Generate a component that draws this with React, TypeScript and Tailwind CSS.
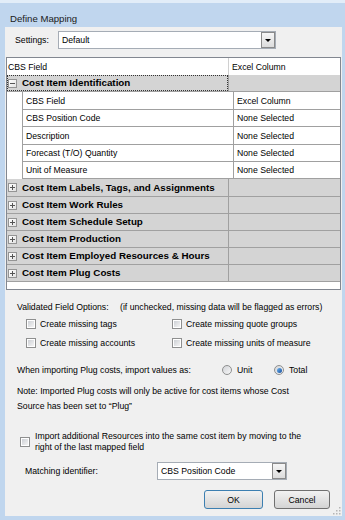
import React from "react";

function Box({ sign }: { sign: "+" | "-" }) {
  return (
    <div className="w-[9px] h-[9px] border border-[#949494] bg-gradient-to-br from-white to-[#e2e2e2] flex items-center justify-center relative shrink-0">
      <div className="absolute left-[1px] top-[3px] w-[5px] h-[1px] bg-[#555]" />
      {sign === "+" && <div className="absolute left-[3px] top-[1px] w-[1px] h-[5px] bg-[#555]" />}
    </div>
  );
}

function Check() {
  return (
    <div className="w-[10px] h-[10px] border border-[#8e8f8f] bg-white p-[1px] shrink-0">
      <div className="w-full h-full bg-gradient-to-br from-[#cdd0d5] to-[#f4f4f4]" />
    </div>
  );
}

function Radio({ on }: { on?: boolean }) {
  return (
    <div className="w-[10px] h-[10px] rounded-full border border-[#8e8f8f] bg-gradient-to-br from-[#d2d4d8] to-[#f7f7f7] flex items-center justify-center shrink-0">
      {on && <div className="w-[5px] h-[5px] rounded-full bg-gradient-to-br from-[#6bb3f0] to-[#1a4f9c]" />}
    </div>
  );
}

function Arrow() {
  return (
    <div className="w-0 h-0 border-l-[3px] border-r-[3px] border-t-[3px] border-l-transparent border-r-transparent border-t-black" />
  );
}

function Combo({ text, w }: { text: string; w: string }) {
  return (
    <div className={`${w} h-[18px] border border-[#a5acb5] bg-white flex items-center justify-between`}>
      <span className="pl-[3px]">{text}</span>
      <div className="w-[14px] h-[16px] border border-[#8a8a8a] bg-gradient-to-b from-[#f6f6f6] to-[#dcdcdc] flex items-center justify-center">
        <Arrow />
      </div>
    </div>
  );
}

const groups = [
  "Cost Item Labels, Tags, and Assignments",
  "Cost Item Work Rules",
  "Cost Item Schedule Setup",
  "Cost Item Production",
  "Cost Item Employed Resources & Hours",
  "Cost Item Plug Costs",
];

const inner = [
  ["CBS Position Code", "h-[17px]"],
  ["Description", "h-[18px]"],
  ["Forecast (T/O) Quantity", "h-[17px]"],
  ["Unit of Measure", "h-[17px]"],
];

export default function App() {
  return (
    <div className="w-[345px] h-[520px] bg-[#c0d6ee] flex flex-col font-['Liberation_Sans',Arial,sans-serif] text-[8.7px] text-black leading-[10px] overflow-hidden relative">
      <div className="h-[3px] bg-[#e2edf8] shrink-0" />
      <div className="h-[24px] pl-[10px] pt-[11px] text-[9.6px] text-[#1a1a1a] shrink-0">Define Mapping</div>
      <div className="flex-1 ml-[5px] mr-[3px] mb-[4px] bg-[#f0f0f0] flex flex-col relative">
        {/* Settings */}
        <div className="mt-[4px] h-[18px] flex items-center">
          <span className="pl-[10px] w-[53px]">Settings:</span>
          <Combo text="Default" w="w-[218px]" />
        </div>

        {/* Grid */}
        <div className="mt-[8px] ml-[1px] w-[335px] h-[233px] border border-[#828790] bg-white flex flex-col">
          <div className="h-[17px] flex shrink-0">
            <div className="w-[222px] border-r border-[#d0d0d0] flex items-center pl-[1px]">CBS Field</div>
            <div className="flex-1 flex items-center pl-[3px]">Excel Column</div>
          </div>
          <div className="h-[17px] flex bg-[#d4d4d4] border-b border-[#a0a0a0] shrink-0">
            <div className="w-[222px] border-r border-[#a0a0a0] flex items-center relative">
              <div className="absolute inset-0 border border-dotted border-[#333]" />
              <div className="ml-[1px]"><Box sign="-" /></div>
              <span className="ml-[5px] font-bold text-[9.8px]">Cost Item Identification</span>
            </div>
            <div className="flex-1" />
          </div>
          <div className="flex shrink-0">
            <div className="w-[15px]" />
            <div className="flex-1 border-l border-[#a0a0a0] flex flex-col">
              <div className="h-[18px] flex border-b border-[#a0a0a0]">
                <div className="w-[211px] border-r border-[#a0a0a0] flex items-center pl-[3px]">CBS Field</div>
                <div className="flex-1 flex items-center pl-[3px]">Excel Column</div>
              </div>
              {inner.map(([t, h]) => (
                <div key={t} className={`${h} flex border-b border-[#a0a0a0]`}>
                  <div className="w-[211px] border-r border-[#a0a0a0] flex items-center pl-[3px]">{t}</div>
                  <div className="flex-1 flex items-center pl-[3px]">None Selected</div>
                </div>
              ))}
            </div>
          </div>
          {groups.map((g, i) => (
            <div key={g} className={`${i === 0 ? "h-[18px]" : "h-[17px]"} flex bg-[#d4d4d4] border-b border-[#a0a0a0] shrink-0`}>
              <div className="w-[222px] border-r border-[#a0a0a0] flex items-center">
                <div className="ml-[1px]"><Box sign="+" /></div>
                <span className="ml-[5px] font-bold text-[9.8px]">{g}</span>
              </div>
              <div className="flex-1" />
            </div>
          ))}
        </div>

        {/* Options */}
        <div className="mt-[12px] h-[10px] flex items-center pl-[12px]">
          <span className="w-[103px]">Validated Field Options:</span>
          <span>(if unchecked, missing data will be flagged as errors)</span>
        </div>
        <div className="mt-[6px] h-[12px] flex items-center pl-[21px]">
          <div className="w-[146px] flex items-center gap-[4px]"><Check /><span>Create missing tags</span></div>
          <div className="flex items-center gap-[4px]"><Check /><span>Create missing quote groups</span></div>
        </div>
        <div className="mt-[7px] h-[12px] flex items-center pl-[21px]">
          <div className="w-[146px] flex items-center gap-[4px]"><Check /><span>Create missing accounts</span></div>
          <div className="flex items-center gap-[4px]"><Check /><span>Create missing units of measure</span></div>
        </div>
        <div className="mt-[15px] h-[12px] flex items-center pl-[12px]">
          <span className="w-[205px]">When importing Plug costs, import values as:</span>
          <div className="w-[52px] flex items-center gap-[5px]"><Radio /><span>Unit</span></div>
          <div className="flex items-center gap-[5px]"><Radio on /><span>Total</span></div>
        </div>
        <div className="mt-[8px] pl-[12px] leading-[15px]">
          Note: Imported Plug costs will only be active for cost items whose Cost
          <br />
          Source has been set to “Plug”
        </div>
        <div className="mt-[17px] flex items-center pl-[15px] gap-[5px]">
          <Check />
          <div className="leading-[11px]">
            Import additional Resources into the same cost item by moving to the
            <br />
            right of the last mapped field
          </div>
        </div>
        <div className="mt-[9px] h-[18px] flex items-center">
          <span className="pl-[20px] w-[152px]">Matching identifier:</span>
          <Combo text="CBS Position Code" w="w-[130px]" />
        </div>
        <div className="mt-[10px] flex pl-[199px] gap-[11px]">
          <div className="w-[59px] h-[19px] rounded-[3px] border border-[#3c7fb1] bg-gradient-to-b from-[#f2f2f2] to-[#d4d4d4] flex items-center justify-center">OK</div>
          <div className="w-[56px] h-[19px] rounded-[3px] border border-[#707070] bg-gradient-to-b from-[#f2f2f2] to-[#d4d4d4] flex items-center justify-center">Cancel</div>
        </div>
        <svg className="absolute right-[1px] bottom-[1px]" width="8" height="8" viewBox="0 0 8 8">
          <rect x="6" y="0" width="1.5" height="1.5" fill="#b5b5b5" />
          <rect x="3" y="3" width="1.5" height="1.5" fill="#b5b5b5" />
          <rect x="6" y="3" width="1.5" height="1.5" fill="#b5b5b5" />
          <rect x="0" y="6" width="1.5" height="1.5" fill="#b5b5b5" />
          <rect x="3" y="6" width="1.5" height="1.5" fill="#b5b5b5" />
          <rect x="6" y="6" width="1.5" height="1.5" fill="#b5b5b5" />
        </svg>
      </div>
    </div>
  );
}
